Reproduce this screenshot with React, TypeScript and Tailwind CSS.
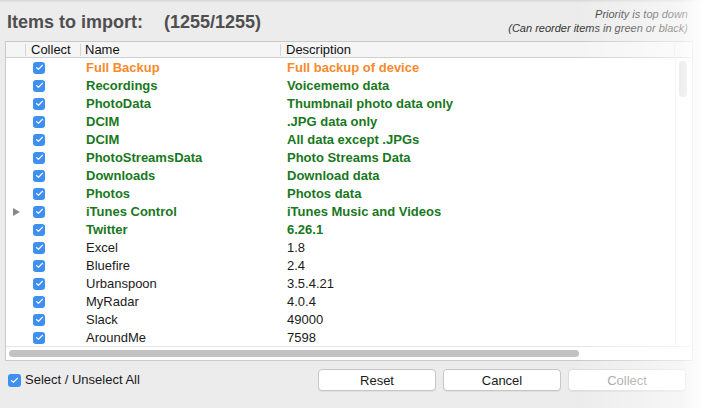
import { Check } from "lucide-react";

type Item = { name: string; desc: string; tone: "orange" | "green" | "plain"; expandable?: boolean };

const items: Item[] = [
  { name: "Full Backup", desc: "Full backup of device", tone: "orange" },
  { name: "Recordings", desc: "Voicememo data", tone: "green" },
  { name: "PhotoData", desc: "Thumbnail photo data only", tone: "green" },
  { name: "DCIM", desc: ".JPG data only", tone: "green" },
  { name: "DCIM", desc: "All data except .JPGs", tone: "green" },
  { name: "PhotoStreamsData", desc: "Photo Streams Data", tone: "green" },
  { name: "Downloads", desc: "Download data", tone: "green" },
  { name: "Photos", desc: "Photos data", tone: "green" },
  { name: "iTunes Control", desc: "iTunes Music and Videos", tone: "green", expandable: true },
  { name: "Twitter", desc: "6.26.1", tone: "green" },
  { name: "Excel", desc: "1.8", tone: "plain" },
  { name: "Bluefire", desc: "2.4", tone: "plain" },
  { name: "Urbanspoon", desc: "3.5.4.21", tone: "plain" },
  { name: "MyRadar", desc: "4.0.4", tone: "plain" },
  { name: "Slack", desc: "49000", tone: "plain" },
  { name: "AroundMe", desc: "7598", tone: "plain" },
];

const toneClass = {
  orange: "font-bold text-[#f68a2c]",
  green: "font-bold text-[#19781d]",
  plain: "text-[#1a1a1a]",
};

function Checkbox({ size = 12 }: { size?: number }) {
  return (
    <span
      className="flex items-center justify-center rounded-[3px] bg-[#3d8ff2]"
      style={{ width: size, height: size }}
    >
      <Check className="h-[9px] w-[9px] text-white" strokeWidth={3} />
    </span>
  );
}

function Button({ label, disabled }: { label: string; disabled?: boolean }) {
  return (
    <button
      className={`h-[22px] w-[118px] rounded-[4px] border bg-white text-[13px] leading-none shadow-[0_1px_0_rgba(0,0,0,0.05)] ${
        disabled ? "border-[#dcdcdc] text-[#9a9a9a]" : "border-[#c6c6c6] text-[#1a1a1a]"
      }`}
    >
      {label}
    </button>
  );
}

export default function App() {
  return (
    <div className="relative h-[408px] w-[726px] overflow-hidden bg-[#ececec] font-['Liberation_Sans',Arial,sans-serif]">
      <div className="h-[3px] bg-gradient-to-b from-[#d6d6d6] to-[#ececec]" />

      {/* title */}
      <div className="flex h-[38px] items-start justify-between pl-[7px] pr-[38px]">
        <div className="flex gap-[21px] pt-[6px] text-[18px] font-bold text-[#4f4f4f]">
          <span>Items to import:</span>
          <span>(1255/1255)</span>
        </div>
        <div className="pt-[4px] text-right text-[11px] italic leading-[14px] text-[#333]">
          <div>Priority is top down</div>
          <div>(Can reorder items in green or black)</div>
        </div>
      </div>

      {/* table */}
      <div className="ml-[5px] w-[688px] border border-[#c9c9c9] bg-white">
        <div className="grid h-[16px] grid-cols-[20px_55px_200px_1fr_17px] border-b border-[#cfcfcf] bg-[#f5f5f5] text-[13px] leading-[16px] text-[#111]">
          <div className="my-[2px] border-r border-[#d6d6d6]" />
          <div className="my-[2px] border-r border-[#d6d6d6] pl-[5px] leading-[12px]">Collect</div>
          <div className="my-[2px] border-r border-[#d6d6d6] pl-[4px] leading-[12px]">Name</div>
          <div className="my-[2px] border-r border-[#e2e2e2] pl-[5px] leading-[12px]">Description</div>
          <div />
        </div>

        <div className="flex">
          <div className="w-[669px]">
            {items.map((it, i) => (
              <div
                key={i}
                className="grid h-[18px] grid-cols-[20px_55px_200px_1fr] items-center text-[13px]"
              >
                <div className="flex justify-center pl-[1px]">
                  {it.expandable && (
                    <span className="h-0 w-0 border-y-[4px] border-l-[7px] border-y-transparent border-l-[#8a8a8a]" />
                  )}
                </div>
                <div className="pl-[7px]">
                  <Checkbox />
                </div>
                <div className={`pl-[5px] ${toneClass[it.tone]}`}>{it.name}</div>
                <div className={`pl-[6px] ${toneClass[it.tone]}`}>{it.desc}</div>
              </div>
            ))}
          </div>
          <div className="w-[17px] border-l border-[#efefef] pl-[3px] pt-[3px]">
            <div className="h-[36px] w-[8px] rounded-full bg-[#d9d9d9]" />
          </div>
        </div>

        <div className="h-[14px] border-t border-[#e6e6e6] px-[3px] pt-[3px]">
          <div className="h-[7px] w-[570px] rounded-full bg-[#c2c2c2]" />
        </div>
      </div>

      {/* footer */}
      <div className="flex items-center pl-[8px] pt-[8px]">
        <div className="flex w-[310px] items-center gap-[4px] text-[13px] text-[#1a1a1a]">
          <Checkbox size={13} />
          <span>Select / Unselect All</span>
        </div>
        <div className="flex gap-[7px]">
          <Button label="Reset" />
          <Button label="Cancel" />
          <Button label="Collect" disabled />
        </div>
      </div>

      {/* right edge fade */}
      <div className="pointer-events-none absolute inset-y-0 right-0 w-[150px] bg-[linear-gradient(to_right,transparent,rgba(255,255,255,0.55)_70%,rgba(255,255,255,0.85)_80%,white_86%)]" />
    </div>
  );
}
